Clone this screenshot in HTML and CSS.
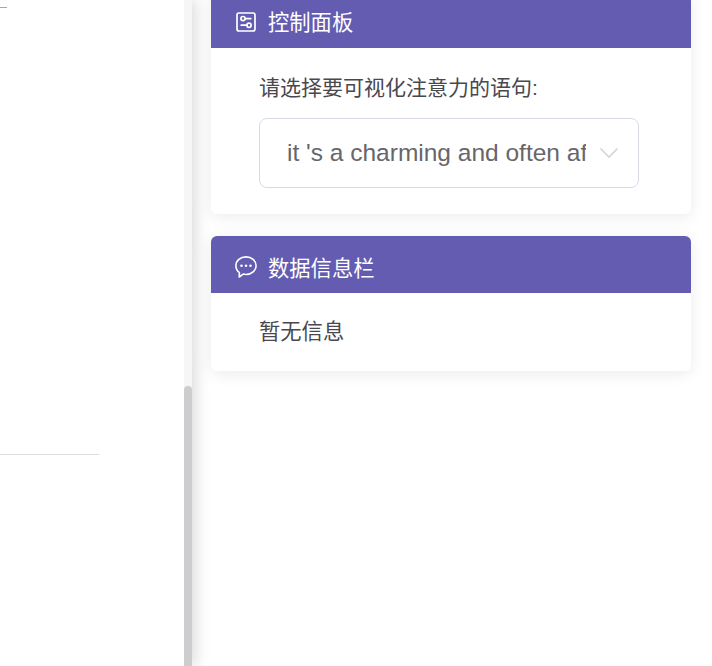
FILE: index.html
```html
<!DOCTYPE html>
<html lang="zh">
<head>
<meta charset="utf-8">
<title>控制面板</title>
<link rel="stylesheet" href="styles.css">
</head>
<body>
<div class="app">
  <aside class="left">
    <div class="left-content">
      <div class="tick"></div>
      <div class="rule"></div>
    </div>
    <div class="scrollbar"><div class="thumb"></div></div>
  </aside>
  <main class="right">
    <section class="card">
      <header class="card-head">
        <svg class="icon" viewBox="0 0 20 20" fill="none" stroke="currentColor" stroke-width="1.7" stroke-linecap="round">
          <rect x="1" y="1" width="18" height="18" rx="2"/>
          <circle cx="7" cy="6.600" r="2.100"/>
          <path d="M9.100 6.600h5.700"/>
          <circle cx="13" cy="13.200" r="2.100"/>
          <path d="M10.900 13.200H5.200"/>
        </svg>
        <span class="title-raised">控制面板</span>
      </header>
      <div class="card-body select-body">
        <label class="prompt">请选择要可视化注意力的语句<span class="colon">:</span></label>
        <div class="select">
          <span class="select-text">it 's a charming and often affecting journey</span>
          <svg class="chevron" viewBox="0 0 20 12" fill="none" stroke="currentColor" stroke-width="1.7">
            <path d="M1.500 1.500l8.500 8.500 8.500-8.500"/>
          </svg>
        </div>
      </div>
    </section>
    <section class="card">
      <header class="card-head">
        <svg class="icon icon-bubble" viewBox="0 0 22 22" fill="none" stroke="currentColor" stroke-width="1.6" stroke-linejoin="round">
          <path d="M11 .900c5.600 0 10.100 3.900 10.100 8.800s-4.500 8.800-10.100 8.800c-1 0-1.900-.1-2.800-.4L4.200 21l.2-4.400C2.300 15 .9 12.500.9 9.700.9 4.800 5.400.900 11 .900z"/>
          <circle cx="6.500" cy="9.800" r="1.300" fill="currentColor" stroke="none"/>
          <circle cx="11" cy="9.800" r="1.300" fill="currentColor" stroke="none"/>
          <circle cx="15.500" cy="9.800" r="1.300" fill="currentColor" stroke="none"/>
        </svg>
        <span>数据信息栏</span>
      </header>
      <div class="card-body info-body">暂无信息</div>
    </section>
  </main>
</div>
</body>
</html>
```
FILE: styles.css
```css
* { box-sizing: border-box; }
html, body { margin: 0; height: 100%; overflow: hidden; background: #fff; }
body { font-family: "Noto Sans CJK SC", "Liberation Sans", sans-serif; color: #48484e; }

.app { display: flex; height: 666px; }

.left {
  width: 192px;
  flex: none;
  display: flex;
  background: #fff;
  box-shadow: 4px 0 14px rgba(0, 0, 0, 0.14);
}
.left-content { flex: 1; min-width: 0; display: flex; flex-direction: column; padding-top: 7px; }
.tick { width: 7px; height: 1px; background: #a8a8a8; }
.rule { width: 99px; height: 1px; background: #dcdcdc; margin-top: 446px; }
.scrollbar { width: 8px; display: flex; flex-direction: column; justify-content: flex-end; background: #f6f6f6; }
.thumb { height: 280px; background: #cdcdcf; border-radius: 4px 4px 0 0; }

.right { flex: 1; padding: 0 21px 0 19px; display: flex; flex-direction: column; gap: 22px; margin-top: -9px; }

.card {
  width: 480px;
  background: #fff;
  border-radius: 6px;
  overflow: hidden;
  box-shadow: 0 3px 16px rgba(0, 0, 0, 0.08);
}
.card-head {
  height: 57px;
  padding: 4px 25px 0;
  display: flex;
  align-items: center;
  gap: 12px;
  background: #635cb0;
  color: #fff;
  font-size: 21.300px;
  line-height: 1;
}
.title-raised { margin-top: -2px; }
.icon { width: 20px; height: 20px; flex: none; }
.icon-bubble { width: 22px; height: 22px; margin: 0 -1px; }
.card-body { padding: 0 52px 0 48px; font-size: 21.300px; }
.select-body { height: 166px; padding-top: 22px; }
.prompt { display: block; font-size: 21px; line-height: 32px; height: 32px; white-space: nowrap; }
.colon { font-family: "Liberation Sans", sans-serif; }
.select {
  margin-top: 16px;
  width: 380px;
  height: 70px;
  display: flex;
  align-items: center;
  padding: 0 19px 0 27px;
  gap: 13px;
  border: 1px solid #d9d8e6;
  border-radius: 8px;
  color: #66666c;
}
.select-text {
  flex: 1;
  min-width: 0;
  overflow: hidden;
  white-space: nowrap;
  font-family: "Liberation Sans", sans-serif;
  font-size: 24.500px;
}
.chevron { width: 20px; height: 12px; flex: none; color: #d4d4dc; }
.info-body { height: 78px; padding-top: 21px; line-height: 32px; }
```
